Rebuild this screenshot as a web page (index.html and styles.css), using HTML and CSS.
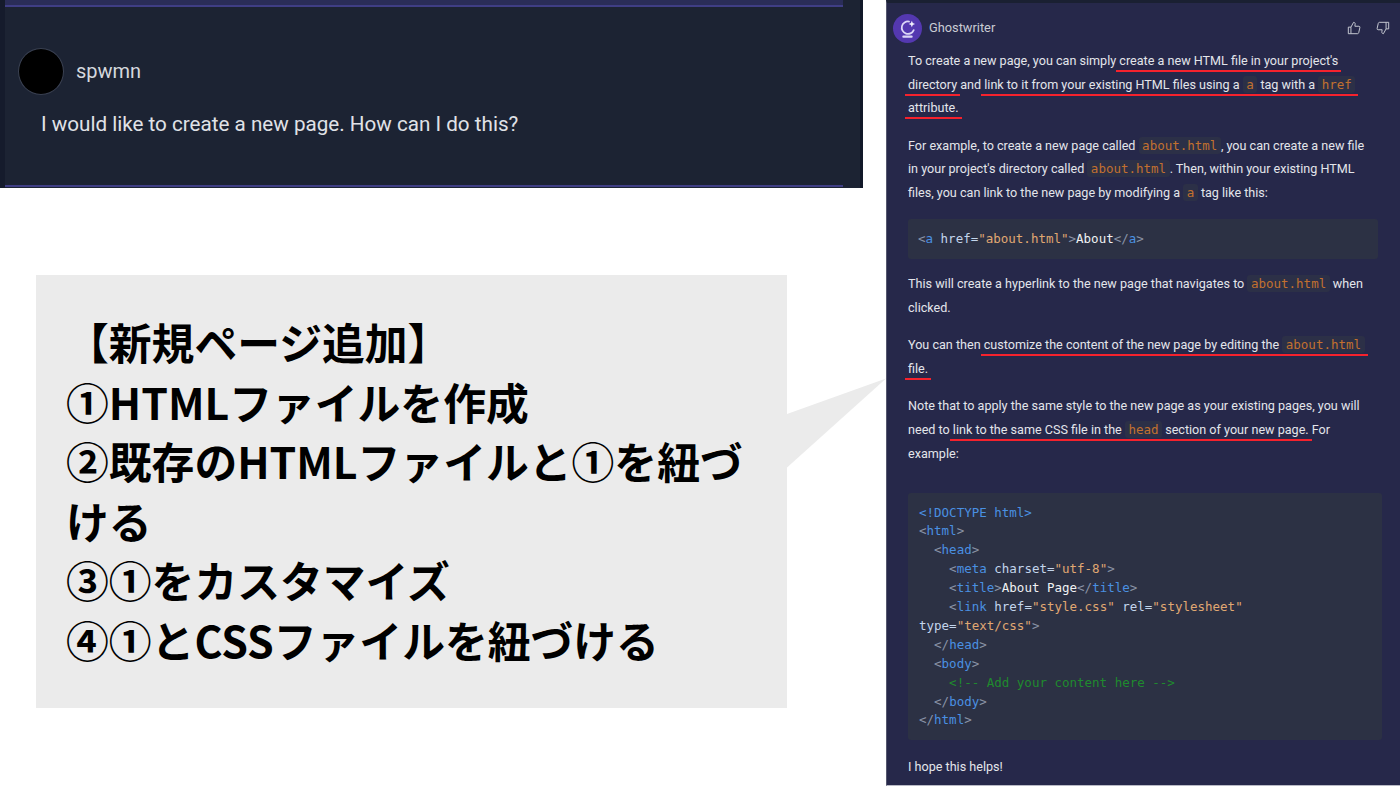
FILE: index.html
```html
<!DOCTYPE html>
<html lang="ja">
<head>
<meta charset="utf-8">
<title>Ghostwriter</title>
<link rel="stylesheet" href="styles.css">
</head>
<body>
<main class="canvas">
  <section class="question">
    <div class="q-head">
      <span class="avatar"></span>
      <span class="q-name">spwmn</span>
    </div>
    <p class="q-text">I would like to create a new page. How can I do this?</p>
  </section>

  <section class="callout">
    <svg class="tail" viewBox="0 0 100 90" aria-hidden="true"><polygon points="0,36 100,0 0,90"/></svg>
    <p class="callout-text"><span class="callout-title">【新規ページ追加】</span>①HTMLファイルを作成<br>②既存のHTMLファイルと①を紐づける<br>③①をカスタマイズ<br>④①とCSSファイルを紐づける</p>
  </section>

  <section class="answer">
    <header class="a-head">
      <svg class="a-logo" viewBox="0 0 28 28" aria-hidden="true">
        <circle cx="14" cy="14" r="14" fill="#5438b0"/>
        <path d="M15.500 7.300A6 6 0 1 0 20 15.500" fill="none" stroke="#dcd6f7" stroke-width="1.700" stroke-linecap="round"/>
        <path d="M18.200 6.500l.9 2.200 2.200.9-2.200.9-.9 2.200-.9-2.200-2.200-.9 2.200-.9z" fill="#f1eefc"/>
        <rect x="9" y="20.800" width="10" height="2.200" rx="1" fill="#dcd6f7"/>
      </svg>
      <span class="a-name">Ghostwriter</span>
      <span class="a-actions">
        <svg class="thumb" viewBox="0 0 16 16" aria-hidden="true"><path d="M1.500 7h3v7.500h-3zM4.500 7l3-5.500c1.300 0 2 .9 1.800 2.200L9 6h4.600c.8 0 1.300.7 1.100 1.500l-1.300 5.800c-.2.7-.7 1.200-1.400 1.200H4.500"/></svg>
        <svg class="thumb" viewBox="0 0 16 16" aria-hidden="true"><path d="M14.500 9h-3V1.500h3zM11.500 9l-3 5.500c-1.300 0-2-.9-1.800-2.200L7 10H2.400c-.8 0-1.300-.7-1.100-1.500l1.300-5.800c.2-.7.7-1.200 1.400-1.200h7.500"/></svg>
      </span>
    </header>
    <div class="a-body">
      <p>To create a new page, you can simply <u>create a new HTML file in your project's directory</u> and <u>link to it from your existing HTML files using a <code>a</code> tag with a <code>href</code> attribute.</u></p>
      <p>For example, to create a new page called <code>about.html</code>, you can create a new file in your project's directory called <code>about.html</code>. Then, within your existing HTML files, you can link to the new page by modifying a <code>a</code> tag like this:</p>
      <pre class="code short"><i>&lt;</i><b>a</b> href=<s>"about.html"</s><i>&gt;</i><em>About</em><i>&lt;/</i><b>a</b><i>&gt;</i></pre>
      <p>This will create a hyperlink to the new page that navigates to <code>about.html</code> when clicked.</p>
      <p>You can then <u>customize the content of the new page by editing the <code>about.html</code> file.</u></p>
      <p>Note that to apply the same style to the new page as your existing pages, you will need to <u>link to the same CSS file in the <code>head</code> section of your new page.</u> For example:</p>
      <pre class="code long"><b>&lt;!DOCTYPE html&gt;</b>
<i>&lt;</i><b>html</b><i>&gt;</i>
  <i>&lt;</i><b>head</b><i>&gt;</i>
    <i>&lt;</i><b>meta</b> charset=<s>"utf-8"</s><i>&gt;</i>
    <i>&lt;</i><b>title</b><i>&gt;</i><em>About Page</em><i>&lt;/</i><b>title</b><i>&gt;</i>
    <i>&lt;</i><b>link</b> href=<s>"style.css"</s> rel=<s>"stylesheet"</s>
type=<s>"text/css"</s><i>&gt;</i>
  <i>&lt;/</i><b>head</b><i>&gt;</i>
  <i>&lt;</i><b>body</b><i>&gt;</i>
    <q>&lt;!-- Add your content here --&gt;</q>
  <i>&lt;/</i><b>body</b><i>&gt;</i>
<i>&lt;/</i><b>html</b><i>&gt;</i></pre>
      <p class="last">I hope this helps!</p>
    </div>
  </section>
</main>
</body>
</html>
```
FILE: styles.css
```css
* { box-sizing: border-box; }
html, body { margin: 0; padding: 0; background: #fff; }
.canvas { position: relative; width: 1400px; height: 787px; overflow: hidden; }

.question {
  position: absolute; left: 0; top: 0; width: 863px; height: 188px;
  background: #1c2333;
  border-left: 5px solid #151b2c;
  border-right: 3px solid #121829;
  padding: 48px 0 0 13px;
  font-family: "Roboto", sans-serif;
}
.question::before, .question::after {
  content: ""; position: absolute; left: 0; width: 838px; background: #3f3e85;
}
.question::before { top: 0; height: 7px; background: linear-gradient(#2a2d58 5px, #3f3e85 5px); }
.question::after { top: 185px; height: 2px; }
.q-head { display: flex; align-items: center; gap: 12px; }
.avatar { width: 46px; height: 47px; border-radius: 50%; background: #000; border: 1px solid #3a4152; }
.q-name { font-size: 20px; color: #d5d8de; padding-bottom: 2px; }
.q-text { margin: 16px 0 0 23px; font-size: 20.650px; line-height: 26px; color: #e0e2e7; }

.callout { position: absolute; left: 36px; top: 275px; width: 751px; height: 433px; background: #ebebeb; padding: 37px 30px 0 30px; }
.tail { position: absolute; left: 751px; top: 102px; width: 99px; height: 92px; fill: #ebebeb; }
.callout-text { margin: 0; font-family: "Noto Sans CJK JP", sans-serif; font-weight: 700; font-size: 42.800px; line-height: 59.500px; color: #000; }
.callout-title { display: block; }

.answer {
  position: absolute; left: 886px; top: 0; width: 514px; height: 786px;
  background: #26284a;
  border-top: 3px solid #1a2032;
  border-left: 1px solid #55576e;
  border-bottom: 1px solid #b9bac6;
  color: #e3e5ea;
  font-family: "Roboto", sans-serif;
}
.a-head { display: flex; align-items: center; height: 46px; padding: 4px 0 0 6px; }
.a-logo { width: 29px; height: 29px; margin-right: 7px; }
.a-name { font-size: 12.800px; color: #c9ccd4; padding-bottom: 2px; }
.a-actions { margin-left: auto; display: flex; gap: 15px; padding-right: 10px; }
.thumb { width: 14px; height: 14px; fill: none; stroke: #c9ccd4; stroke-width: 1.100; stroke-linejoin: round; }
.a-body { padding: 0 21px; font-size: 12.600px; line-height: 23.700px; }
.a-body p { margin: 0 0 13.600px; max-width: 462px; }
.a-body p.last { margin: 15px 0 0; }
.a-body u {
  text-decoration: none;
  border-bottom: 2px solid #f5222d;
  padding: 0 3px 2px;
  margin: 0 -3px;
  -webkit-box-decoration-break: clone;
  box-decoration-break: clone;
}
.a-body code {
  font-family: "DejaVu Sans Mono", monospace; font-size: 12.500px; color: #c2702f;
  background: #2c3047; border-radius: 3px; padding: 1px 3.500px;
}
.code {
  margin: 0; background: #2c3144; border-radius: 3px;
  font-family: "DejaVu Sans Mono", monospace; font-size: 12.500px; color: #c3d5ec; white-space: pre;
}
.code.short { height: 40px; line-height: 40px; padding: 0 10px; margin: 14px 0 13.600px 0; width: 470px; }
.code.long { line-height: 18.900px; padding: 11px 11px; margin: 27px 0 0 0; height: 247px; width: 474px; }
.code i { font-style: normal; color: #8a93a6; }
.code b { font-weight: 400; color: #4a90e2; }
.code s { text-decoration: none; color: #e0a872; }
.code em { font-style: normal; color: #f0f1f3; }
.code q { quotes: none; color: #1f8a2e; }
```
